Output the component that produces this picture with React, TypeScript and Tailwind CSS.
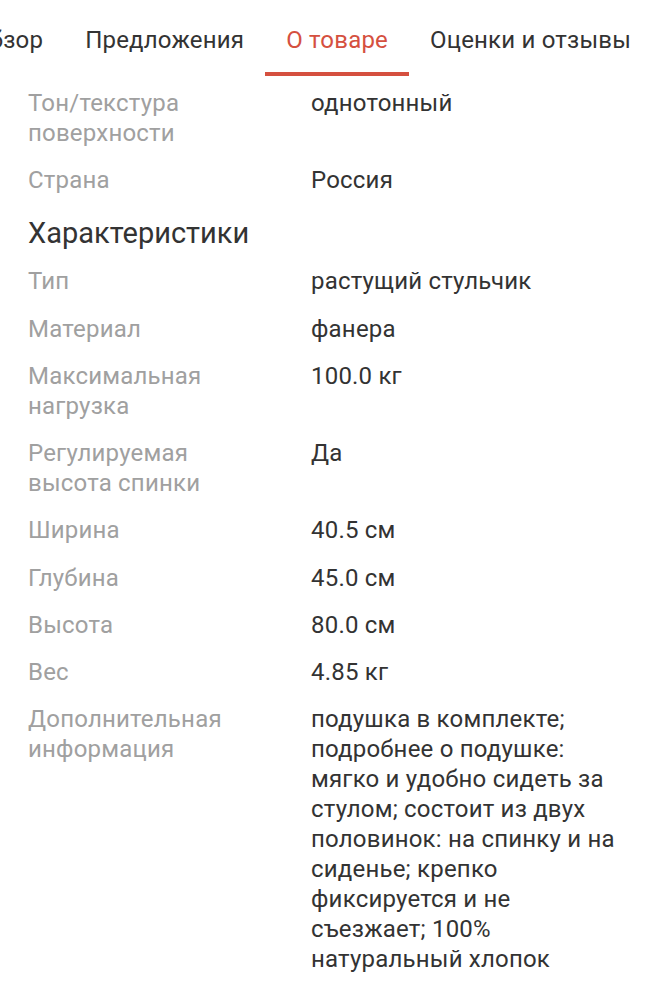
const tabs = ['Обзор', 'Предложения', 'О товаре', 'Оценки и отзывы']

const surface = [
  { label: 'Тон/текстура поверхности', value: 'однотонный' },
  { label: 'Страна', value: 'Россия' },
]

const specs = [
  { label: 'Тип', value: 'растущий стульчик' },
  { label: 'Материал', value: 'фанера' },
  { label: 'Максимальная нагрузка', value: '100.0 кг' },
  { label: 'Регулируемая высота спинки', value: 'Да' },
  { label: 'Ширина', value: '40.5 см' },
  { label: 'Глубина', value: '45.0 см' },
  { label: 'Высота', value: '80.0 см' },
  { label: 'Вес', value: '4.85 кг' },
  {
    label: 'Дополнительная информация',
    value:
      'подушка в комплекте; подробнее о подушке: мягко и удобно сидеть за стулом; состоит из двух половинок: на спинку и на сиденье; крепко фиксируется и не съезжает; 100% натуральный хлопок',
  },
]

function Row({ label, value }: { label: string; value: string }) {
  return (
    <div className="flex mb-[17.25px] text-[24px] leading-[30px] tracking-[0.2px]">
      <div className="w-[311px] flex-shrink-0 pl-[28px] pr-[60px] text-[#a0a0a0]">{label}</div>
      <div className="w-[312px] text-[#333333]">{value}</div>
    </div>
  )
}

export default function App() {
  return (
    <div
      className="w-[649px] min-h-[1000px] bg-white overflow-hidden"
      style={{ fontFamily: 'Roboto, "Noto Sans", sans-serif' }}
    >
      {/* ── Tabs (scrolled a little to the left) ── */}
      <div className="overflow-hidden">
        <div className="flex ml-[-48px] whitespace-nowrap">
          {tabs.map((t) => {
            const active = t === 'О товаре'
            return (
              <div key={t} className="flex flex-col px-[21px] pt-[25px]">
                <span
                  className={
                    'text-[24px] leading-[30px] tracking-[0.2px] ' +
                    (active ? 'text-[#d5503f]' : 'text-[#333333]')
                  }
                >
                  {t}
                </span>
                <div
                  className={'mt-[17px] h-[4px] -mx-[21px] ' + (active ? 'bg-[#d5503f]' : 'bg-transparent')}
                />
              </div>
            )
          })}
        </div>
      </div>

      {/* ── Properties ── */}
      <div className="pt-[12px]">
        {surface.map((r) => (
          <Row key={r.label} {...r} />
        ))}

        <h2 className="mt-[21px] mb-[16px] pl-[28px] text-[29px] leading-[34px] text-[#333333] font-normal">
          Характеристики
        </h2>

        {specs.map((r) => (
          <Row key={r.label} {...r} />
        ))}
      </div>
    </div>
  )
}
